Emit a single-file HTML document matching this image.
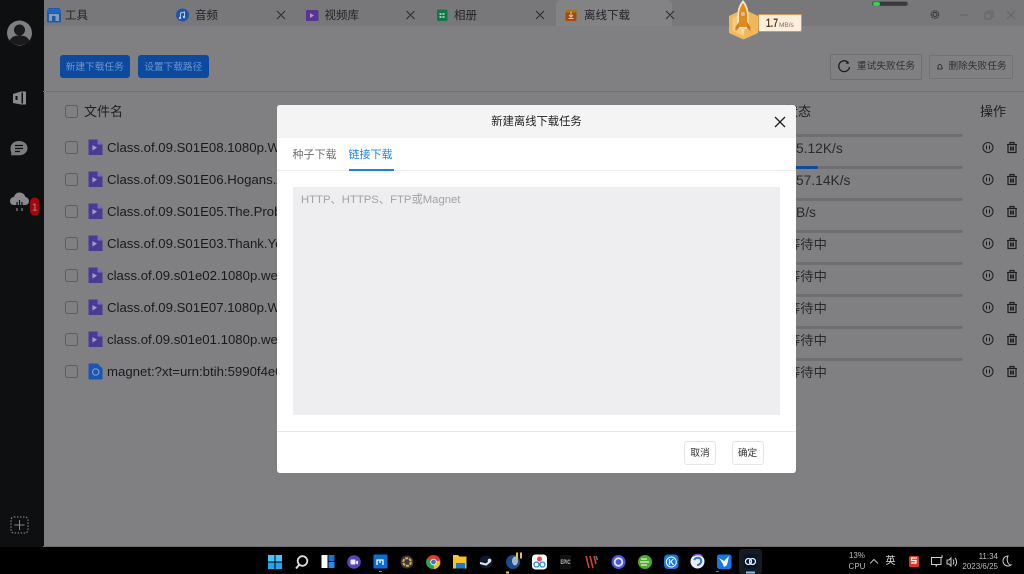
<!DOCTYPE html>
<html><head><meta charset="utf-8"><style>
html,body{margin:0;padding:0;width:1024px;height:574px;overflow:hidden;background:#808082}
body{font-family:"Liberation Sans","Noto Sans CJK SC",sans-serif;position:relative;color:#1c1c1e}
.a{position:absolute;white-space:nowrap}
svg{position:absolute;overflow:visible}
.cb{position:absolute;left:65px;width:11px;height:11px;border:1.3px solid #5e5e60;border-radius:2.5px}
.nm{position:absolute;left:107px;font-size:13.2px;line-height:18px;color:#1a1a1c;width:170px;overflow:hidden;white-space:nowrap}
.bar{position:absolute;left:796px;width:167px;height:3px;background:#6f6f71;border-radius:2px}
.st{position:absolute;left:796px;font-size:13.8px;line-height:18px;color:#2a2a2c;white-space:nowrap}
.w{font-size:13.3px;left:787px}
.tb{position:absolute;top:8px;font-size:11.5px;line-height:16px;color:#232325;white-space:nowrap}
.ti{position:absolute;left:0;top:0;width:1024px;height:574px;pointer-events:none}
</style></head><body>
<!-- tab bar -->
<div class="a" style="left:44px;top:0;width:980px;height:26px;background:#78787a"></div>
<div class="a" style="left:556px;top:0;width:116px;height:26px;background:#838385;border-radius:5px 5px 0 0"></div>
<!-- sidebar -->
<div class="a" style="left:0;top:0;width:43.5px;height:547px;background:#0e0f11"></div>
<div class="a" style="left:43px;top:91px;width:981px;height:1px;background:#737375"></div>
<div class="a" style="left:0;top:547px;width:1024px;height:27px;background:#000"></div>
<div class="a" style="left:43px;top:546px;width:981px;height:1px;background:#6c6c6e"></div>

<svg class="ti" viewBox="0 0 1024 574">
<!-- avatar -->
<circle cx="19.5" cy="33" r="12.5" fill="#7f7f81"/>
<circle cx="19.5" cy="30" r="5.5" fill="#1a1a1c"/>
<path d="M9.500 41c1.500-4 5-5.500 10-5.500s8.500 1.500 10 5.500c-2.500 2.800-6 4-10 4s-7.500-1.200-10-4z" fill="#1a1a1c"/>
<!-- sidebar icons -->
<path d="M13 94l8-2.500h5v13h-5l-8-1.500z" fill="#8a8a8c"/><rect x="21.500" y="92.500" width="1.500" height="11" fill="#0e0f11"/><rect x="15.500" y="96" width="2" height="4" fill="#0e0f11"/>
<path d="M19 141c-5 0-8.500 3-8.500 7.500 0 2 .7 3.500 1 5l-.8 1.800h8.300c5 0 8.500-3 8.500-7 0-4.300-3.500-7.300-8.500-7.300z" fill="#7c7c7e"/>
<path d="M15 145.500h8M15 148.500h8M15 151.500h5" stroke="#0e0f11" stroke-width="1.300"/>
<path d="M14 205c-3 0-4-2-4-4 0-2.500 2-4 4-4 .8-3 3-4.500 5.500-4.500 3 0 5.500 2 5.800 4.500 2 .3 3.700 1.800 3.700 4 0 2.300-1.500 4-4 4z" fill="#8a8a8c"/>
<path d="M17 210v-8M19.500 212v-12M22 210v-8" stroke="#0e0f11" stroke-width="1.200" fill="none"/>
<path d="M17 208v3M22 208v3" stroke="#8a8a8c" stroke-width="1.200"/>
<rect x="30" y="197.5" width="9.500" height="18" rx="4.700" fill="#a4060c"/>
<text x="34.800" y="210.500" font-size="10" text-anchor="middle" fill="#999" font-family="Liberation Sans">1</text>
<rect x="11" y="517" width="17" height="16" rx="3" fill="none" stroke="#77777a" stroke-width="1.300" stroke-dasharray="1.500 1.500"/>
<path d="M19.500 520v10M14.500 525h10" stroke="#88888a" stroke-width="1"/>

<!-- tabs icons -->
<path d="M47 12l1.500-4h11l1.500 4v9a1.500 1.500 0 0 1-1.500 1.500h-11A1.500 1.500 0 0 1 47 21z" fill="#1a5cac"/><rect x="49" y="14" width="10" height="7" fill="#8a9ab0"/><rect x="47" y="9" width="14" height="4" rx="1.500" fill="#1d66c4"/><rect x="52" y="16" width="3.500" height="5" fill="#1a5cac"/>
<circle cx="182.500" cy="15" r="6.500" fill="#1d56a8"/><path d="M180.500 18v-5l4-1v5" stroke="#b8c8e0" stroke-width="1" fill="none"/><circle cx="180" cy="18" r="1.200" fill="#b8c8e0"/><circle cx="184" cy="17" r="1.200" fill="#b8c8e0"/>
<rect x="306" y="10" width="12.500" height="11" rx="1" fill="#5a3396"/><path d="M310 13v5l4-2.500z" fill="#a8a0c0"/>
<rect x="437" y="9.500" width="10.500" height="11.500" rx="1.500" fill="#11774a"/><path d="M439.500 13h2v2h-2zM442.500 13h2v2h-2zM439.500 16h2v2h-2zM442.500 16h2v2h-2z" fill="#9fc9b0"/>
<rect x="565.500" y="9.500" width="11" height="11.500" rx="1.500" fill="#a8480f"/><rect x="565.500" y="9.500" width="11" height="3" fill="#a87810"/><path d="M571 11.500v5.500M569 15l2 2 2-2M568.500 18.500h5" stroke="#e0c8b0" stroke-width="1" fill="none"/>
<g stroke="#2a2a2c" stroke-width="1" fill="none">
<path d="M277 11l8 8M285 11l-8 8M406.500 11l8 8M414.500 11l-8 8M536 11l8 8M544 11l-8 8M666 11l8 8M674 11l-8 8"/>
</g>
<!-- rocket widget -->
<path d="M743.500 9l14.500 7v17l-14.500 6.500L729 33V16z" fill="#f0b85a"/>
<path d="M743.500 12v24l-11-5V18z" fill="#f6ca7c"/>
<path d="M743 0c3.500 4 5.500 9 5.500 15v14h-11V15c0-6 2-11 5.500-15z" fill="#f7e6c4"/>
<path d="M743 3c2.500 3.500 4 8 4 12v12h-8V15c0-4 1.500-8.500 4-12z" fill="#e08a20"/>
<path d="M739 22l-3.500 5v4l3.500-3zM747 22l3.500 5v4l-3.500-3z" fill="#d47d16"/>
<path d="M741 28l2 8 2-8z" fill="#f8dca4"/>
<circle cx="743" cy="14" r="2" fill="#d8c39a"/>
<rect x="758.500" y="14.500" width="43" height="17" rx="1.500" fill="#fbeedd" stroke="#d59a4f" stroke-width="1"/>
<text x="766" y="27" font-size="12" font-weight="700" fill="#5a3a1c" font-family="Liberation Sans" textLength="12" lengthAdjust="spacingAndGlyphs">1.7</text>
<text x="779" y="27" font-size="6.500" fill="#8a6a4c" font-family="Liberation Sans">MB/s</text>
<!-- status pill -->
<rect x="872" y="1.500" width="36" height="4.500" rx="2.200" fill="#3a3a3c" stroke="#6a6a6c" stroke-width=".6"/>
<rect x="873" y="2" width="7" height="4" rx="2" fill="#2ad64f"/>
<!-- window controls -->
<g stroke="#333335" fill="none" stroke-width="1"><circle cx="935" cy="14.500" r="2"/><circle cx="935" cy="14.500" r="3.800" stroke-dasharray="2 .6"/></g>
<path d="M960 15h8" stroke="#656567"/><path d="M985 13h6v6h-6zM987.500 13v-2h5.500v6h-2" stroke="#656567" fill="none"/><path d="M1007 11l8 8M1015 11l-8 8" stroke="#656567"/>
<!-- retry icon -->
<path d="M848.500 63a5.400 5.400 0 1 0 1 4" stroke="#1e1e20" stroke-width="1.300" fill="none"/><path d="M846.500 60.500l2.800 2.800-3 .8z" fill="#1e1e20"/>
<path d="M937 69h5M938 69v-2.500a1.700 1.700 0 0 1 3.500-.5l1 3" stroke="#333" fill="none" stroke-width="1"/>
<!-- file icons -->
<g>
<path d="M88.500 139.500h9l5 5v10.500h-14z" fill="#4a3a98"/><path d="M97.500 139.500l5 5h-5z" fill="#786eb4"/><path d="M92.500 145v5.500l4.500-2.700z" fill="#a59ecb"/>
<path d="M88.500 171.500h9l5 5v10.500h-14z" fill="#4a3a98"/><path d="M97.500 171.500l5 5h-5z" fill="#786eb4"/><path d="M92.500 177v5.500l4.500-2.700z" fill="#a59ecb"/>
<path d="M88.500 203.500h9l5 5v10.500h-14z" fill="#4a3a98"/><path d="M97.500 203.500l5 5h-5z" fill="#786eb4"/><path d="M92.500 209v5.500l4.500-2.700z" fill="#a59ecb"/>
<path d="M88.500 235.500h9l5 5v10.500h-14z" fill="#4a3a98"/><path d="M97.500 235.500l5 5h-5z" fill="#786eb4"/><path d="M92.500 241v5.500l4.500-2.700z" fill="#a59ecb"/>
<path d="M88.500 267.500h9l5 5v10.500h-14z" fill="#4a3a98"/><path d="M97.500 267.500l5 5h-5z" fill="#786eb4"/><path d="M92.500 273v5.500l4.500-2.700z" fill="#a59ecb"/>
<path d="M88.500 299.500h9l5 5v10.500h-14z" fill="#4a3a98"/><path d="M97.500 299.500l5 5h-5z" fill="#786eb4"/><path d="M92.500 305v5.500l4.500-2.700z" fill="#a59ecb"/>
<path d="M88.500 331.500h9l5 5v10.500h-14z" fill="#4a3a98"/><path d="M97.500 331.500l5 5h-5z" fill="#786eb4"/><path d="M92.500 337v5.500l4.500-2.700z" fill="#a59ecb"/>
<path d="M88.500 364.500a1 1 0 0 1 1-1h8l5 5v10a1 1 0 0 1-1 1h-12a1 1 0 0 1-1-1z" fill="#1d55b4"/><circle cx="95.700" cy="372" r="3.200" fill="none" stroke="#7d9ccc" stroke-width="1.200"/>
</g>
<!-- op icons -->
<g stroke="#232325" fill="none" stroke-width="1.100" transform="translate(0 .5)">
<circle cx="988" cy="147" r="5"/><path d="M986.500 145v4M989.500 145v4"/>
<circle cx="988" cy="179" r="5"/><path d="M986.500 177v4M989.500 177v4"/>
<circle cx="988" cy="211" r="5"/><path d="M986.500 209v4M989.500 209v4"/>
<circle cx="988" cy="243" r="5"/><path d="M986.500 241v4M989.500 241v4"/>
<circle cx="988" cy="275" r="5"/><path d="M986.500 273v4M989.500 273v4"/>
<circle cx="988" cy="307" r="5"/><path d="M986.500 305v4M989.500 305v4"/>
<circle cx="988" cy="339" r="5"/><path d="M986.500 337v4M989.500 337v4"/>
<circle cx="988" cy="371" r="5"/><path d="M986.500 369v4M989.500 369v4"/>
</g>
<g stroke="#1e1e20" fill="none" stroke-width="1.200">
<path d="M1007 144.500h10M1010 144.500v-2h4v2M1008 144.500v8h8v-8M1010.500 146.500v4M1012 146.500v4M1013.500 146.500v4"/>
<path d="M1007 176.500h10M1010 176.500v-2h4v2M1008 176.500v8h8v-8M1010.500 178.500v4M1012 178.500v4M1013.500 178.500v4"/>
<path d="M1007 208.500h10M1010 208.500v-2h4v2M1008 208.500v8h8v-8M1010.500 210.500v4M1012 210.500v4M1013.500 210.500v4"/>
<path d="M1007 240.500h10M1010 240.500v-2h4v2M1008 240.500v8h8v-8M1010.500 242.500v4M1012 242.500v4M1013.500 242.500v4"/>
<path d="M1007 272.500h10M1010 272.500v-2h4v2M1008 272.500v8h8v-8M1010.500 274.500v4M1012 274.500v4M1013.500 274.500v4"/>
<path d="M1007 304.500h10M1010 304.500v-2h4v2M1008 304.500v8h8v-8M1010.500 306.500v4M1012 306.500v4M1013.500 306.500v4"/>
<path d="M1007 336.500h10M1010 336.500v-2h4v2M1008 336.500v8h8v-8M1010.500 338.500v4M1012 338.500v4M1013.500 338.500v4"/>
<path d="M1007 368.500h10M1010 368.500v-2h4v2M1008 368.500v8h8v-8M1010.500 370.500v4M1012 370.500v4M1013.500 370.500v4"/>
</g>
</svg>

<div class="tb" style="left:65px">工具</div>
<div class="tb" style="left:195px">音频</div>
<div class="tb" style="left:324.5px">视频库</div>
<div class="tb" style="left:454px">相册</div>
<div class="tb" style="left:584px">离线下载</div>

<div class="a" style="left:59.5px;top:55px;width:70.5px;height:23px;background:#0c4aa0;border-radius:3px;color:#6f95c6;font-size:9.7px;line-height:25px;text-align:center">新建下载任务</div>
<div class="a" style="left:138px;top:55px;width:70.5px;height:23px;background:#0c4aa0;border-radius:3px;color:#6f95c6;font-size:9.7px;line-height:25px;text-align:center">设置下载路径</div>
<div class="a" style="left:830px;top:54px;width:90px;height:24px;border:1px solid #6e6e70;border-radius:1px"></div>
<div class="a" style="left:857px;top:60px;font-size:9.7px;line-height:14px;color:#303032">重试失败任务</div>
<div class="a" style="left:929px;top:55px;width:82px;height:22px;border:1px solid #737375;border-radius:1px"></div>
<div class="a" style="left:948.5px;top:60px;font-size:9.7px;line-height:14px;color:#303032">删除失败任务</div>

<div class="cb" style="top:105px"></div>
<div class="a" style="left:84px;top:103px;font-size:13px;line-height:18px;color:#1f1f21">文件名</div>
<div class="a" style="left:785px;top:103px;font-size:13px;line-height:18px;color:#1f1f21">状态</div>
<div class="a" style="left:980px;top:103px;font-size:13px;line-height:18px;color:#1f1f21">操作</div>

<div class="cb" style="top:141px"></div><div class="nm" style="top:139px">Class.of.09.S01E08.1080p.WEB</div>
<div class="cb" style="top:173px"></div><div class="nm" style="top:171px">Class.of.09.S01E06.Hogans.Alley</div>
<div class="cb" style="top:205px"></div><div class="nm" style="top:203px">Class.of.09.S01E05.The.Problem</div>
<div class="cb" style="top:237px"></div><div class="nm" style="top:235px">Class.of.09.S01E03.Thank.You</div>
<div class="cb" style="top:269px"></div><div class="nm" style="top:267px">class.of.09.s01e02.1080p.web</div>
<div class="cb" style="top:301px"></div><div class="nm" style="top:299px">Class.of.09.S01E07.1080p.WEB</div>
<div class="cb" style="top:333px"></div><div class="nm" style="top:331px">class.of.09.s01e01.1080p.web</div>
<div class="cb" style="top:365px"></div><div class="nm" style="top:363px">magnet:?xt=urn:btih:5990f4e0</div>

<div class="bar" style="top:134px"></div>
<div class="bar" style="top:166px"></div><div class="a" style="left:796px;top:166px;width:22px;height:3px;background:#0c4aa0;border-radius:0 2px 2px 0"></div>
<div class="bar" style="top:198px"></div>
<div class="bar" style="top:230px"></div>
<div class="bar" style="top:262px"></div>
<div class="bar" style="top:294px"></div>
<div class="bar" style="top:326px"></div>
<div class="bar" style="top:358px"></div>
<div class="st" style="top:140px">5.12K/s</div>
<div class="st" style="top:172px">57.14K/s</div>
<div class="st" style="top:204px">B/s</div>
<div class="st w" style="top:236px">等待中</div>
<div class="st w" style="top:268px">等待中</div>
<div class="st w" style="top:300px">等待中</div>
<div class="st w" style="top:332px">等待中</div>
<div class="st w" style="top:364px">等待中</div>

<!-- dialog -->
<div class="a" style="left:277px;top:105px;width:519px;height:367.5px;background:#fff;border-radius:3px;overflow:hidden">
 <div class="a" style="left:0;top:0;width:519px;height:33px;background:#f4f4f4"></div>
 <div class="a" style="left:0;top:8px;width:519px;text-align:center;font-size:11.3px;line-height:18px;color:#222">新建离线下载任务</div>
 <div class="a" style="left:15.5px;top:40.500px;font-size:11px;line-height:18px;color:#6f6f6f">种子下载</div>
 <div class="a" style="left:71.5px;top:40.500px;font-size:11px;line-height:18px;color:#2384e6">链接下载</div>
 <div class="a" style="left:0;top:65px;width:519px;height:1px;background:#ececec"></div>
 <div class="a" style="left:71.5px;top:63.5px;width:45px;height:2px;background:#1f80e2"></div>
 <div class="a" style="left:16px;top:82px;width:487px;height:228px;background:#eeeef0"></div>
 <div class="a" style="left:24px;top:87px;font-size:11.3px;line-height:16px;color:#a2a2a4">HTTP、HTTPS、FTP或Magnet</div>
 <div class="a" style="left:0;top:326px;width:519px;height:1px;background:#e8e8e8"></div>
 <div class="a" style="left:407px;top:336px;width:30px;height:22px;border:1px solid #e4e4e4;border-radius:3px;text-align:center;font-size:9.700px;line-height:24px;color:#333">取消</div>
 <div class="a" style="left:454.5px;top:336px;width:30px;height:22px;border:1px solid #e4e4e4;border-radius:3px;text-align:center;font-size:9.700px;line-height:24px;color:#333">确定</div>
 <svg style="left:0;top:0" width="519" height="40"><path d="M498 12l10 10M508 12l-10 10" stroke="#222" stroke-width="1.300"/></svg>
</div>

<!-- taskbar icons -->
<svg class="ti" viewBox="0 0 1024 574">
<g fill="#27a5ea"><rect x="268" y="555" width="6.500" height="6.500" fill="#4cc2ff"/><rect x="275.500" y="555" width="6.500" height="6.500" fill="#4cc2ff"/><rect x="268" y="562.500" width="6.500" height="6.500"/><rect x="275.500" y="562.500" width="6.500" height="6.500"/></g>
<circle cx="302.500" cy="561" r="4.800" fill="none" stroke="#ddd" stroke-width="1.800"/><path d="M299 565l-3 3.500" stroke="#ddd" stroke-width="2"/>
<rect x="321.500" y="555" width="6" height="13" fill="#fff"/><rect x="328.500" y="555" width="6" height="6" fill="#1f6fd0"/><rect x="328.500" y="562" width="6" height="6" fill="#2a8ae8"/>
<circle cx="354" cy="562" r="6.800" fill="#5a45b8"/><rect x="350.500" y="559.500" width="5" height="5" rx="1" fill="#eee"/><path d="M356 561.500l2-1v4l-2-1z" fill="#eee"/>
<rect x="373.500" y="554.500" width="14" height="14" rx="1" fill="#0a6fd0"/><path d="M377 565v-5h3v3M380 560h3v5" stroke="#fff" stroke-width="1.300" fill="none"/>
<rect x="379" y="571" width="3" height="1" fill="#888"/>
<circle cx="407" cy="562" r="6.500" fill="#3a3a3a"/><circle cx="407" cy="562" r="3.800" fill="none" stroke="#d8b04a" stroke-width="2" stroke-dasharray="3 1"/>
<circle cx="433.500" cy="562" r="7" fill="#e23b2e"/><path d="M433.500 562l6.500-1.500a7 7 0 0 1-6 8.500z" fill="#f4c20d"/><path d="M433.500 562l-.5 7a7 7 0 0 1-6-10.500z" fill="#2ea44f"/><circle cx="433.500" cy="562" r="3.200" fill="#fff"/><circle cx="433.500" cy="562" r="2.400" fill="#2a77e0"/>
<path d="M453 555h5l1.500 1.500h7v12h-13.500z" fill="#f5c236"/><rect x="456" y="563" width="9" height="5.500" fill="#1a7ac8"/>
<circle cx="486" cy="562" r="6.500" fill="#0f1b2e"/><path d="M480 563l6 1.500 4-3" stroke="#e8e8e8" stroke-width="2" fill="none"/><circle cx="489.500" cy="560.500" r="1.800" fill="#e8e8e8"/>
<circle cx="513" cy="562" r="7" fill="#1a4a8a"/><ellipse cx="515" cy="561" rx="3" ry="4.500" fill="#a8b8c8"/><rect x="516" y="552.500" width="2" height="6" fill="#e8c83a"/><rect x="520" y="552.500" width="2" height="6" fill="#e8c83a"/><rect x="506" y="571.500" width="3" height="2" fill="#e8c83a"/>
<rect x="532" y="554.500" width="15" height="15" rx="3.500" fill="#fff"/><circle cx="539.500" cy="559" r="2.500" fill="#e84a4a"/><circle cx="536.500" cy="564.500" r="2.500" fill="none" stroke="#2a8ae8" stroke-width="1.300"/><circle cx="542.500" cy="564.500" r="2.500" fill="none" stroke="#2a8ae8" stroke-width="1.300"/>
<rect x="560" y="555" width="11" height="14" fill="#111"/>
<text x="565.500" y="564" font-size="6" font-weight="700" fill="#bbb" text-anchor="middle" font-family="Liberation Sans" textLength="10" lengthAdjust="spacingAndGlyphs">EPIC</text>
<path d="M586 556l3 12M590 556l3 12M594 556l2 8" stroke="#c9452e" stroke-width="1.600" fill="none"/><path d="M596 556l1.500 4" stroke="#3a8a9a" stroke-width="1.500"/>
<circle cx="618.500" cy="562" r="7" fill="#4a56d8"/><circle cx="618.500" cy="562" r="3.800" fill="none" stroke="#dfe3ff" stroke-width="1.800"/>
<circle cx="645" cy="562" r="7" fill="#4aaa2a"/><path d="M640 562h9M641 559h6M641 565h6" stroke="#eee" stroke-width="1.300"/>
<rect x="664" y="554.500" width="14.500" height="14.500" rx="4" fill="#1678e8"/><circle cx="671.300" cy="562" r="5" fill="none" stroke="#fff" stroke-width="1"/><text x="671.300" y="565" font-size="8" font-weight="700" fill="#fff" text-anchor="middle" font-family="Liberation Sans">K</text>
<circle cx="697.500" cy="561.500" r="7" fill="#eef"/><path d="M694 560c2-3 6-3 7 0 1 3-2 5-4 5" stroke="#2a78d8" stroke-width="2" fill="none"/><path d="M693 556c3-2 7-2 9 0" stroke="#7a4ad8" stroke-width="1.500" fill="none"/>
<rect x="717" y="554.500" width="14.500" height="14.500" rx="2.500" fill="#1678e8"/><path d="M719 558l5 3 5-5-2 9-3 2-1-3z" fill="#fff"/><rect x="716" y="571" width="3" height="1" fill="#777"/>
<rect x="739" y="549" width="23" height="25" rx="3" fill="#171a1e"/><rect x="744" y="554" width="13.500" height="14" rx="2" fill="#031430"/>
<circle cx="748.500" cy="561.500" r="3" fill="none" stroke="#eee" stroke-width="1.300"/><circle cx="752.500" cy="561.500" r="3" fill="none" stroke="#eee" stroke-width="1.300"/>
<rect x="746" y="571.500" width="9" height="2" fill="#7cc4ec"/>
<path d="M870 563.500l4-4 4 4" stroke="#bbb" fill="none"/>
<rect x="909" y="556" width="10" height="11" rx="1.500" fill="#d83a1e"/>
<path d="M917 558h-5.500v2.500h4.500v2.500h-5" stroke="#fff" stroke-width="1.300" fill="none"/>
<path d="M942 555v3" stroke="#ccc" fill="none"/><path d="M931.500 557.500h9.500v7h-4l-1 2v-2h-4.500z" fill="none" stroke="#ccc"/>
<path d="M947 560h2l2-2v8l-2-2h-2zM953 559.500c1 1.500 1 3.500 0 5M955 558c2 2 2 6 0 8" stroke="#ccc" fill="none"/>
<path d="M1008 556a5 5 0 1 0 3 9c-3 0-5-5-3-9z" fill="none" stroke="#ccc"/>
</svg>
<div class="a" style="left:848px;top:551px;font-size:8px;line-height:10.500px;color:#bbb;text-align:center;width:18px">13%<br>CPU</div>
<div class="a" style="left:885.5px;top:555px;font-size:10px;line-height:14px;color:#ddd">英</div>
<div class="a" style="left:960px;top:551.500px;font-size:8px;line-height:10px;color:#bbb;text-align:right;width:38px">11:34<br>2023/6/25</div>
</body></html>
